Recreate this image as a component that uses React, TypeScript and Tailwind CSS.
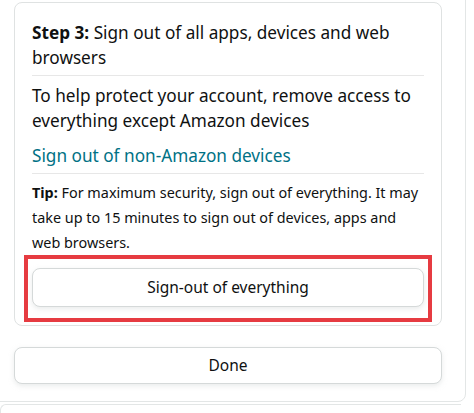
export default function App() {
  return (
    <div
      className="h-[413px] w-[474px] overflow-hidden bg-white text-[#0f1111]"
      style={{ fontFamily: '"Noto Sans", Arial, sans-serif' }}
    >
      <div className="-ml-2 -mt-2 h-[410px] w-[474px] rounded-lg border border-[#e3e6e6] pb-[17px] pl-[21px] pr-[23px] pt-[9px]">
        <div className="rounded-lg border border-[#dfe2e2] px-[17px] pb-[3px] pt-[17px]">
          <h2 className="text-[17.2px] leading-[25px]">
            <span className="font-bold">Step 3:</span> Sign out of all apps, devices and web browsers
          </h2>
          <div className="mb-[7px] mt-[5px] h-px bg-[#e7e7e7]" />
          <p className="text-[17.2px] leading-[25px]">
            To help protect your account, remove access to everything except Amazon devices
          </p>
          <a href="#" className="mt-[10px] block text-[17.2px] leading-[25px] text-[#007185]">
            Sign out of non-Amazon devices
          </a>
          <div className="mb-[6px] mt-[5px] h-px bg-[#e7e7e7]" />
          <p className="text-[14.4px] leading-[25px]">
            <span className="font-bold">Tip:</span> For maximum security, sign out of everything. It may take up to 15 minutes to sign out of devices, apps and web browsers.
          </p>
          <div className="-mx-2 border-4 border-[#e63b41] px-1 pb-[11px] pt-[9px]">
            <button
              type="button"
              className="flex h-[39px] w-full items-center justify-center rounded-lg border border-[#d5d9d9] bg-white text-[15.5px] shadow-[0_2px_5px_0_rgba(213,217,217,0.5)]"
            >
              Sign-out of everything
            </button>
          </div>
        </div>
        <button
          type="button"
          className="mt-[21px] flex h-[37px] w-[428px] items-center justify-center rounded-lg border border-[#d5d9d9] bg-white text-[15.5px] shadow-[0_2px_5px_0_rgba(213,217,217,0.5)]"
        >
          Done
        </button>
      </div>
      <div className="mt-[2px] h-4 w-[461px] rounded-tl-md border-l border-t border-[#e3e6e6]" />
    </div>
  );
}
